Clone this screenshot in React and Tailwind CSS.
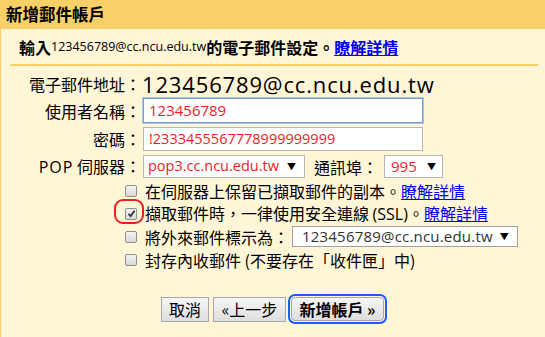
import React from "react";

const F = { fontFamily: '"Open Sans","Noto Sans CJK TC",sans-serif' };

function Box({ checked }) {
  return (
    <span className="inline-flex w-[12px] h-[12px] rounded-[2px] border border-[#8f8f8f] bg-gradient-to-b from-[#f4f4f4] to-[#d8d8d8] items-center justify-center shrink-0">
      {checked && (
        <svg width="9" height="9" viewBox="0 0 9 9">
          <path d="M1.5 4.8 L3.6 7 L7.6 1.8" stroke="#333" strokeWidth="1.8" fill="none" />
        </svg>
      )}
    </span>
  );
}

function Arrow() {
  return <span className="text-[9px] text-black leading-none">▼</span>;
}

export default function App() {
  return (
    <div
      className="w-[545px] h-[337px] bg-[#fff5d7] border-l border-[#f9d068] overflow-hidden text-black"
      style={{ fontFamily: '"Noto Sans CJK TC","Open Sans",sans-serif' }}
    >
      <div className="h-[29px] bg-[#f9d068] pl-[5px] flex items-center font-bold text-[16.5px] leading-none">
        新增郵件帳戶
      </div>
      <div className="h-[35px] pl-[18px] flex items-center font-bold text-[16px] leading-none pt-[1px]">
        輸入
        <span className="font-normal text-[12.5px]" style={F}>
          123456789@cc.ncu.edu.tw
        </span>
        的電子郵件設定。
        <a className="text-[#0000ee] underline">瞭解詳情</a>
      </div>
      <div className="ml-[9px] w-[528px] h-[2px] bg-[#f9d068]" />

      <div className="flex flex-col text-[16px] leading-none">
        <div className="h-[31px] flex items-center pt-[4px]">
          <div className="w-[140px] text-right">電子郵件地址：</div>
          <div className="text-[22px] tracking-[0.85px] ml-[1px]" style={F}>
            123456789@cc.ncu.edu.tw
          </div>
        </div>
        <div className="h-[25px] flex items-center mt-[1px]">
          <div className="w-[142px] text-right pr-[2px]">使用者名稱：</div>
          <div className="w-[280px] h-[25px] border border-[#7a9cd3] bg-white shadow-[0_0_0_1px_#a9c4ee] flex items-center pl-[5px] text-[15px] text-[#ee1c25]" style={F}>
            123456789
          </div>
        </div>
        <div className="h-[24px] flex items-center mt-[4px]">
          <div className="w-[142px] text-right pr-[2px]">密碼：</div>
          <div className="w-[280px] h-[24px] border border-[#b5b5b5] bg-white flex items-center pl-[5px] text-[14.5px] text-[#ee1c25]" style={F}>
            !2333455567778999999999
          </div>
        </div>
        <div className="h-[23px] flex items-center mt-[4px]">
          <div className="w-[142px] text-right pr-[2px]">
            <span className="tracking-[1px]" style={F}>POP</span> 伺服器：
          </div>
          <div className="w-[162px] h-[23px] border border-[#b5b5b5] bg-white flex items-center justify-between pl-[4px] pr-[8px] text-[14.5px] text-[#ee1c25]" style={F}>
            pop3.cc.ncu.edu.tw
            <Arrow />
          </div>
          <div className="ml-[9px] mr-[6px]">通訊埠：</div>
          <div className="w-[59px] h-[23px] border border-[#b5b5b5] bg-white flex items-center justify-between pl-[6px] pr-[6px] text-[15px] text-[#ee1c25]" style={F}>
            995
            <Arrow />
          </div>
        </div>

        <div className="mt-[1px] flex flex-col pl-[124px]">
          <div className="h-[23px] flex items-center">
            <Box />
            <span className="ml-[8px]">
              在伺服器上保留已擷取郵件的副本。<a className="text-[#0000ee] underline">瞭解詳情</a>
            </span>
          </div>
          <div className="h-[23px] flex items-center relative">
            <span className="absolute left-[-11px] top-[-3px] w-[30px] h-[25px] border-2 border-[#e8201f] rounded-[9px]" />
            <Box checked />
            <span className="ml-[8px]">
              擷取郵件時，一律使用安全連線 <span style={F}>(SSL)</span>。<a className="text-[#0000ee] underline">瞭解詳情</a>
            </span>
          </div>
          <div className="h-[23px] flex items-center">
            <Box />
            <span className="ml-[8px] w-[144px] shrink-0 whitespace-nowrap">將外來郵件標示為：</span>
            <div className="ml-[3px] w-[226px] shrink-0 h-[21px] border border-[#a0a0a0] bg-white flex items-center justify-between pl-[9px] pr-[8px] text-[15px] tracking-[0.2px] text-[#333]" style={F}>
              123456789@cc.ncu.edu.tw
              <Arrow />
            </div>
          </div>
          <div className="h-[23px] flex items-center">
            <Box />
            <span className="ml-[8px]">
              封存內收郵件 (不要存在「收件匣」中)
            </span>
          </div>
        </div>

        <div className="flex items-center mt-[23px] pl-[160px]">
          <button className="w-[48px] h-[25px] border border-[#a8a8a8] bg-gradient-to-b from-[#f6f6f6] to-[#dedede] text-[16px] leading-none">
            取消
          </button>
          <button className="ml-[4px] w-[73px] h-[25px] border border-[#a8a8a8] bg-gradient-to-b from-[#f6f6f6] to-[#dedede] text-[16px] leading-none">
            «上一步
          </button>
          <button className="ml-[2px] w-[99px] h-[30px] rounded-[7px] border-2 border-[#1a5cff] p-[1px] flex">
            <span className="flex-1 rounded-[4px] border border-[#a8a8a8] bg-gradient-to-b from-[#f6f6f6] to-[#dedede] text-[16px] font-bold leading-none flex items-center justify-center">
              新增帳戶 »
            </span>
          </button>
        </div>
      </div>
    </div>
  );
}
